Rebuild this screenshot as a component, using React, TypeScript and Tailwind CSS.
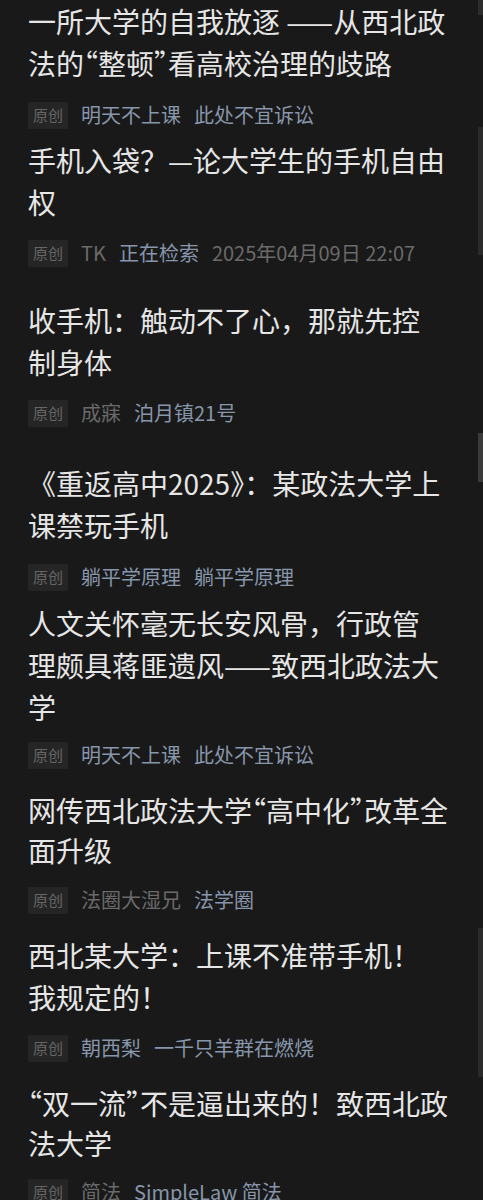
import React from "react";

type Tone = "blue" | "gray";

interface Article {
  lines: string[];
  meta: { text: string; tone: Tone }[];
  top: string;
  leading: string;
  metaTop: string;
}

const articles: Article[] = [
  {
    lines: ["一所大学的自我放逐 ——从西北政", "法的“整顿”看高校治理的歧路"],
    meta: [
      { text: "明天不上课", tone: "blue" },
      { text: "此处不宜诉讼", tone: "blue" },
    ],
    top: "mt-0",
    leading: "leading-[42px]",
    metaTop: "mt-[17px]",
  },
  {
    lines: ["手机入袋？—论大学生的手机自由", "权"],
    meta: [
      { text: "TK", tone: "gray" },
      { text: "正在检索", tone: "blue" },
      { text: "2025年04月09日 22:07", tone: "gray" },
    ],
    top: "mt-[10px]",
    leading: "leading-[42px]",
    metaTop: "mt-[16px]",
  },
  {
    lines: ["收手机：触动不了心，那就先控", "制身体"],
    meta: [
      { text: "成寐", tone: "gray" },
      { text: "泊月镇21号", tone: "blue" },
    ],
    top: "mt-[32px]",
    leading: "leading-[42px]",
    metaTop: "mt-[16px]",
  },
  {
    lines: ["《重返高中2025》：某政法大学上", "课禁玩手机"],
    meta: [
      { text: "躺平学原理", tone: "blue" },
      { text: "躺平学原理", tone: "blue" },
    ],
    top: "mt-[35px]",
    leading: "leading-[42px]",
    metaTop: "mt-[17px]",
  },
  {
    lines: ["人文关怀毫无长安风骨，行政管", "理颇具蒋匪遗风——致西北政法大", "学"],
    meta: [
      { text: "明天不上课", tone: "blue" },
      { text: "此处不宜诉讼", tone: "blue" },
    ],
    top: "mt-[11px]",
    leading: "leading-[42px]",
    metaTop: "mt-[13px]",
  },
  {
    lines: ["网传西北政法大学“高中化”改革全", "面升级"],
    meta: [
      { text: "法圈大湿兄", tone: "gray" },
      { text: "法学圈", tone: "blue" },
    ],
    top: "mt-[21px]",
    leading: "leading-[40px]",
    metaTop: "mt-[16px]",
  },
  {
    lines: ["西北某大学：上课不准带手机！", "我规定的！"],
    meta: [
      { text: "朝西梨", tone: "blue" },
      { text: "一千只羊群在燃烧", tone: "blue" },
    ],
    top: "mt-[20px]",
    leading: "leading-[42px]",
    metaTop: "mt-[16px]",
  },
  {
    lines: ["“双一流”不是逼出来的！致西北政", "法大学"],
    meta: [
      { text: "简法", tone: "gray" },
      { text: "SimpleLaw 简法", tone: "blue" },
    ],
    top: "mt-[21px]",
    leading: "leading-[40px]",
    metaTop: "mt-[15px]",
  },
];

// curly quotes are half-width in the reference
function renderLine(line: string) {
  return line.split(/([“”])/).map((part, i) =>
    part === "“" || part === "”" ? (
      <span key={i} className={'[font-feature-settings:"halt"]'}>
        {part}
      </span>
    ) : (
      <React.Fragment key={i}>{part}</React.Fragment>
    )
  );
}

function ArticleItem({ article }: { article: Article }) {
  return (
    <div className={article.top}>
      {/* Title */}
      <div className={`text-[28px] text-[#e6e6e6] ${article.leading}`}>
        {article.lines.map((line, i) => (
          <div key={i} className="whitespace-nowrap">
            {renderLine(line)}
          </div>
        ))}
      </div>

      {/* Meta row */}
      <div className={`flex items-center gap-[13px] h-[28px] ${article.metaTop}`}>
        <span className="h-[27px] px-[5px] flex items-center rounded-[2px] bg-[#252525] text-[15px] text-[#666666]">
          原创
        </span>
        {article.meta.map((m, i) => (
          <span
            key={i}
            className={`text-[20px] leading-none whitespace-nowrap ${
              m.tone === "blue" ? "text-[#8796ab]" : "text-[#6a6a6a]"
            }`}
          >
            {m.text}
          </span>
        ))}
      </div>
    </div>
  );
}

export default function App() {
  return (
    <div
      className="relative min-h-[1200px] h-[1200px] overflow-hidden bg-[#191919] pl-[28px]"
      style={{ fontFamily: '"Noto Sans CJK SC", "Noto Sans", sans-serif' }}
    >
      {articles.map((a, i) => (
        <ArticleItem key={i} article={a} />
      ))}

      {/* Scrollbar fragments from the stitched screenshots */}
      <div className="absolute right-0 top-0 w-[5px] h-[15px] bg-[#2c2c2c]" />
      <div className="absolute right-0 top-[127px] w-[5px] h-[128px] bg-[#2a2a2a]" />
      <div className="absolute right-0 top-[433px] w-[5px] h-[49px] bg-[#3a3a3a]" />
      <div className="absolute right-0 top-[928px] w-[5px] h-[149px] bg-[#2a2a2a]" />
    </div>
  );
}
